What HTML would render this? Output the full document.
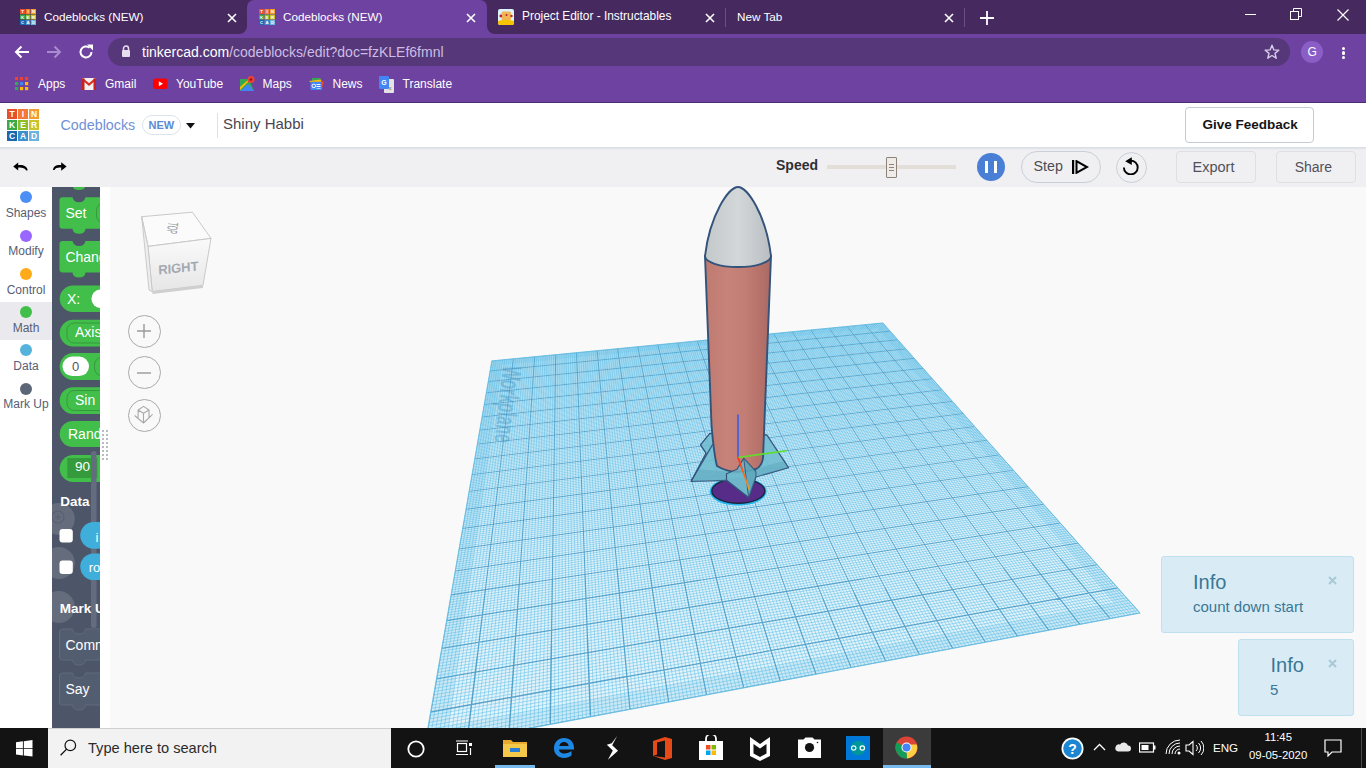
<!DOCTYPE html><html><head><meta charset="utf-8"><style>
html,body{margin:0;padding:0;width:1366px;height:768px;overflow:hidden;background:#f9f9f9}
body{position:relative;font-family:"Liberation Sans", sans-serif}
svg{display:block}
</style></head><body>
<div style="position:absolute;left:0px;top:0px;width:1366px;height:34px;background:#46295f"></div>
<div style="position:absolute;left:247px;top:0;width:240px;height:34px;background:#6e42a0;border-radius:7px 7px 0 0"></div>
<div style="position:absolute;left:239px;top:26px;width:8px;height:8px;background:#6e42a0"></div>
<div style="position:absolute;left:231px;top:18px;width:16px;height:16px;background:#46295f;border-radius:50%"></div>
<div style="position:absolute;left:487px;top:26px;width:8px;height:8px;background:#6e42a0"></div>
<div style="position:absolute;left:487px;top:18px;width:16px;height:16px;background:#46295f;border-radius:50%"></div>
<svg style="position:absolute;left:20px;top:9px;" width="16" height="16" viewBox="0 0 16 16"><rect x="0.00" y="0.00" width="5.00" height="5.00" fill="#e8502b"/><text x="2.50" y="4.10" font-size="4.25" font-weight="bold" fill="#fff" text-anchor="middle" font-family="Liberation Sans">T</text><rect x="5.50" y="0.00" width="5.00" height="5.00" fill="#f37934"/><text x="8.00" y="4.10" font-size="4.25" font-weight="bold" fill="#fff" text-anchor="middle" font-family="Liberation Sans">I</text><rect x="11.00" y="0.00" width="5.00" height="5.00" fill="#f39c34"/><text x="13.50" y="4.10" font-size="4.25" font-weight="bold" fill="#fff" text-anchor="middle" font-family="Liberation Sans">N</text><rect x="0.00" y="5.50" width="5.00" height="5.00" fill="#3aa84a"/><text x="2.50" y="9.60" font-size="4.25" font-weight="bold" fill="#fff" text-anchor="middle" font-family="Liberation Sans">K</text><rect x="5.50" y="5.50" width="5.00" height="5.00" fill="#8dbf25"/><text x="8.00" y="9.60" font-size="4.25" font-weight="bold" fill="#fff" text-anchor="middle" font-family="Liberation Sans">E</text><rect x="11.00" y="5.50" width="5.00" height="5.00" fill="#c9c42e"/><text x="13.50" y="9.60" font-size="4.25" font-weight="bold" fill="#fff" text-anchor="middle" font-family="Liberation Sans">R</text><rect x="0.00" y="11.00" width="5.00" height="5.00" fill="#1767b1"/><text x="2.50" y="15.10" font-size="4.25" font-weight="bold" fill="#fff" text-anchor="middle" font-family="Liberation Sans">C</text><rect x="5.50" y="11.00" width="5.00" height="5.00" fill="#3e8fcd"/><text x="8.00" y="15.10" font-size="4.25" font-weight="bold" fill="#fff" text-anchor="middle" font-family="Liberation Sans">A</text><rect x="11.00" y="11.00" width="5.00" height="5.00" fill="#6ab4e0"/><text x="13.50" y="15.10" font-size="4.25" font-weight="bold" fill="#fff" text-anchor="middle" font-family="Liberation Sans">D</text></svg>
<div style="position:absolute;left:44px;top:11.03px;font-size:11.7px;line-height:11.7px;color:#fff;font-weight:400;white-space:nowrap;">Codeblocks (NEW)</div>
<svg style="position:absolute;left:227px;top:12.5px;" width="10" height="10" viewBox="0 0 10 10"><path d="M1 1L9 9M9 1L1 9" stroke="#fff" stroke-width="1.6"/></svg>
<svg style="position:absolute;left:259px;top:9px;" width="16" height="16" viewBox="0 0 16 16"><rect x="0.00" y="0.00" width="5.00" height="5.00" fill="#e8502b"/><text x="2.50" y="4.10" font-size="4.25" font-weight="bold" fill="#fff" text-anchor="middle" font-family="Liberation Sans">T</text><rect x="5.50" y="0.00" width="5.00" height="5.00" fill="#f37934"/><text x="8.00" y="4.10" font-size="4.25" font-weight="bold" fill="#fff" text-anchor="middle" font-family="Liberation Sans">I</text><rect x="11.00" y="0.00" width="5.00" height="5.00" fill="#f39c34"/><text x="13.50" y="4.10" font-size="4.25" font-weight="bold" fill="#fff" text-anchor="middle" font-family="Liberation Sans">N</text><rect x="0.00" y="5.50" width="5.00" height="5.00" fill="#3aa84a"/><text x="2.50" y="9.60" font-size="4.25" font-weight="bold" fill="#fff" text-anchor="middle" font-family="Liberation Sans">K</text><rect x="5.50" y="5.50" width="5.00" height="5.00" fill="#8dbf25"/><text x="8.00" y="9.60" font-size="4.25" font-weight="bold" fill="#fff" text-anchor="middle" font-family="Liberation Sans">E</text><rect x="11.00" y="5.50" width="5.00" height="5.00" fill="#c9c42e"/><text x="13.50" y="9.60" font-size="4.25" font-weight="bold" fill="#fff" text-anchor="middle" font-family="Liberation Sans">R</text><rect x="0.00" y="11.00" width="5.00" height="5.00" fill="#1767b1"/><text x="2.50" y="15.10" font-size="4.25" font-weight="bold" fill="#fff" text-anchor="middle" font-family="Liberation Sans">C</text><rect x="5.50" y="11.00" width="5.00" height="5.00" fill="#3e8fcd"/><text x="8.00" y="15.10" font-size="4.25" font-weight="bold" fill="#fff" text-anchor="middle" font-family="Liberation Sans">A</text><rect x="11.00" y="11.00" width="5.00" height="5.00" fill="#6ab4e0"/><text x="13.50" y="15.10" font-size="4.25" font-weight="bold" fill="#fff" text-anchor="middle" font-family="Liberation Sans">D</text></svg>
<div style="position:absolute;left:283px;top:11.03px;font-size:11.7px;line-height:11.7px;color:#fff;font-weight:400;white-space:nowrap;">Codeblocks (NEW)</div>
<svg style="position:absolute;left:466px;top:12.5px;" width="10" height="10" viewBox="0 0 10 10"><path d="M1 1L9 9M9 1L1 9" stroke="#fff" stroke-width="1.6"/></svg>
<svg style="position:absolute;left:498px;top:9px;" width="16" height="16" viewBox="0 0 16 16"><rect x="0" y="0" width="16" height="16" rx="2" fill="#dcf3fb"/><rect x="3.5" y="2.5" width="9.5" height="9" rx="1.5" fill="#f1b456"/><circle cx="2.8" cy="7" r="1.4" fill="#c02424"/><circle cx="13.5" cy="7" r="1.2" fill="#c02424"/><circle cx="8.5" cy="6" r="1" fill="#b03020"/><path d="M0 12Q8 9.5 16 12V14A2 2 0 0 1 14 16H2A2 2 0 0 1 0 14Z" fill="#f7c300"/></svg>
<div style="position:absolute;left:522px;top:11.00px;font-size:11.9px;line-height:11.9px;color:#fff;font-weight:400;white-space:nowrap;">Project Editor - Instructables</div>
<svg style="position:absolute;left:704.5px;top:12.5px;" width="10" height="10" viewBox="0 0 10 10"><path d="M1 1L9 9M9 1L1 9" stroke="#fff" stroke-width="1.6"/></svg>
<div style="position:absolute;left:725px;top:8px;width:1px;height:19px;background:#6a5086"></div>
<div style="position:absolute;left:737px;top:11.03px;font-size:11.7px;line-height:11.7px;color:#fff;font-weight:400;white-space:nowrap;">New Tab</div>
<svg style="position:absolute;left:944px;top:12.5px;" width="10" height="10" viewBox="0 0 10 10"><path d="M1 1L9 9M9 1L1 9" stroke="#fff" stroke-width="1.6"/></svg>
<div style="position:absolute;left:964px;top:8px;width:1px;height:19px;background:#6a5086"></div>
<svg style="position:absolute;left:980px;top:11px;" width="14" height="14" viewBox="0 0 14 14"><path d="M7 0V14M0 7H14" stroke="#fff" stroke-width="1.8"/></svg>
<div style="position:absolute;left:1245px;top:14px;width:11px;height:1px;background:#fff"></div>
<svg style="position:absolute;left:1290px;top:8px;" width="13" height="12" viewBox="0 0 13 12"><rect x="0.5" y="3.5" width="8" height="8" fill="none" stroke="#fff"/><path d="M3.5 3.5V0.5H11.5V8.5H8.5" fill="none" stroke="#fff"/></svg>
<svg style="position:absolute;left:1337px;top:9px;" width="12" height="12" viewBox="0 0 12 12"><path d="M0.5 0.5L11.5 11.5M11.5 0.5L0.5 11.5" stroke="#fff" stroke-width="1.2"/></svg>
<div style="position:absolute;left:0px;top:34px;width:1366px;height:68px;background:#6e42a0"></div>
<svg style="position:absolute;left:14px;top:45px;" width="16" height="14" viewBox="0 0 16 14"><path d="M15 7H2M7.5 1.5L2 7L7.5 12.5" fill="none" stroke="#fff" stroke-width="2"/></svg>
<svg style="position:absolute;left:46px;top:45px;" width="16" height="14" viewBox="0 0 16 14"><path d="M1 7H14M8.5 1.5L14 7L8.5 12.5" fill="none" stroke="#a98bd0" stroke-width="2"/></svg>
<svg style="position:absolute;left:78px;top:44px;" width="16" height="16" viewBox="0 0 16 16"><path d="M13.5 8A5.5 5.5 0 1 1 11.6 3.8" fill="none" stroke="#fff" stroke-width="2"/><path d="M9 0.5H15V6.5Z" fill="#fff"/></svg>
<div style="position:absolute;left:108px;top:38px;width:1182px;height:28px;border-radius:14px;background:#55377a"></div>
<svg style="position:absolute;left:121px;top:45px;" width="10" height="12" viewBox="0 0 10 12"><path d="M2.5 5V3.5A2.5 2.5 0 0 1 7.5 3.5V5" fill="none" stroke="#e6def0" stroke-width="1.5"/><rect x="1" y="5" width="8" height="7" rx="1" fill="#e6def0"/></svg>
<div style="position:absolute;left:142px;top:45.06px;font-size:14px;line-height:14px;color:#fff;font-weight:400;white-space:nowrap;">tinkercad.com<span style="color:#cdbde3">/codeblocks/edit?doc=fzKLEf6fmnl</span></div>
<svg style="position:absolute;left:1264px;top:44px;" width="16" height="16" viewBox="0 0 16 16"><path d="M8 1.2L9.9 5.9L14.8 6.2L11 9.4L12.2 14.2L8 11.5L3.8 14.2L5 9.4L1.2 6.2L6.1 5.9Z" fill="none" stroke="#d8cce8" stroke-width="1.4" stroke-linejoin="round"/></svg>
<div style="position:absolute;left:1301px;top:41px;width:22px;height:22px;border-radius:50%;background:#8a5dc7"></div>
<div style="position:absolute;left:1307.5px;top:45.88px;font-size:12px;line-height:12px;color:#fff;font-weight:400;white-space:nowrap;">G</div>
<div style="position:absolute;left:1342px;top:46.8px;width:3.4px;height:3.4px;border-radius:50%;background:#fff"></div>
<div style="position:absolute;left:1342px;top:51.3px;width:3.4px;height:3.4px;border-radius:50%;background:#fff"></div>
<div style="position:absolute;left:1342px;top:55.8px;width:3.4px;height:3.4px;border-radius:50%;background:#fff"></div>
<svg style="position:absolute;left:15px;top:77px;" width="14" height="14" viewBox="0 0 14 14"><rect x="0" y="0" width="3.2" height="3.2" fill="#ea4335"/><rect x="5" y="0" width="3.2" height="3.2" fill="#ea4335"/><rect x="10" y="0" width="3.2" height="3.2" fill="#ea4335"/><rect x="0" y="5" width="3.2" height="3.2" fill="#34a853"/><rect x="5" y="5" width="3.2" height="3.2" fill="#4285f4"/><rect x="10" y="5" width="3.2" height="3.2" fill="#fbbc05"/><rect x="0" y="10" width="3.2" height="3.2" fill="#34a853"/><rect x="5" y="10" width="3.2" height="3.2" fill="#fbbc05"/><rect x="10" y="10" width="3.2" height="3.2" fill="#fbbc05"/></svg>
<div style="position:absolute;left:38px;top:77.88px;font-size:12px;line-height:12px;color:#fff;font-weight:400;white-space:nowrap;">Apps</div>
<svg style="position:absolute;left:82px;top:78px;" width="14" height="12" viewBox="0 0 14 12"><rect x="0" y="0" width="14" height="12" rx="1.5" fill="#f1f1f1"/><path d="M0.5 1L7 6.5L13.5 1" fill="none" stroke="#d93025" stroke-width="2.2"/><rect x="0" y="0.5" width="2.5" height="11.5" fill="#c5221f"/><rect x="11.5" y="0.5" width="2.5" height="11.5" fill="#c5221f"/></svg>
<div style="position:absolute;left:105px;top:77.88px;font-size:12px;line-height:12px;color:#fff;font-weight:400;white-space:nowrap;">Gmail</div>
<svg style="position:absolute;left:153px;top:78px;" width="15" height="12" viewBox="0 0 15 12"><rect x="0" y="0.5" width="14.5" height="10.5" rx="2.5" fill="#f00"/><path d="M5.8 3.3L10 5.75L5.8 8.2Z" fill="#fff"/></svg>
<div style="position:absolute;left:176px;top:77.88px;font-size:12px;line-height:12px;color:#fff;font-weight:400;white-space:nowrap;">YouTube</div>
<svg style="position:absolute;left:239px;top:75px;" width="16" height="17" viewBox="0 0 16 17"><path d="M1 4H10L15 16H1Z" fill="#34a853"/><path d="M1 16L9 9L15 16Z" fill="#4285f4"/><path d="M1 12L10 4H12L1 15Z" fill="#fbbc05"/><circle cx="12" cy="4.5" r="3.6" fill="#ea4335"/><circle cx="12" cy="4.5" r="1.3" fill="#a50e0e"/></svg>
<div style="position:absolute;left:262.5px;top:77.88px;font-size:12px;line-height:12px;color:#fff;font-weight:400;white-space:nowrap;">Maps</div>
<svg style="position:absolute;left:309px;top:78px;" width="15" height="12" viewBox="0 0 15 12"><rect x="3" y="0" width="8.5" height="3" fill="#34a853"/><path d="M0.3 3L12 1.5L12.5 4H0.8Z" fill="#fbbc05"/><path d="M12 2.5L14.7 3.5L13.5 10Z" fill="#ea4335"/><rect x="1.5" y="3.8" width="11.5" height="8.2" rx="0.6" fill="#4285f4"/><circle cx="4.8" cy="7.9" r="1.8" fill="none" stroke="#fff" stroke-width="1"/><rect x="7.5" y="6" width="4" height="1" fill="#fff"/><rect x="7.5" y="8" width="4" height="1" fill="#fff"/><rect x="7.5" y="10" width="4" height="0.8" fill="#cfe0fc"/></svg>
<div style="position:absolute;left:332.5px;top:77.88px;font-size:12px;line-height:12px;color:#fff;font-weight:400;white-space:nowrap;">News</div>
<svg style="position:absolute;left:379px;top:76px;" width="15" height="17" viewBox="0 0 15 17"><rect x="5" y="3" width="10" height="14" rx="1" fill="#e3e3e3"/><rect x="0" y="0" width="10" height="13" rx="1" fill="#4285f4"/><text x="5" y="9" font-size="7" fill="#fff" text-anchor="middle" font-family="Liberation Sans" font-weight="bold">G</text><text x="11" y="14" font-size="6" fill="#666" text-anchor="middle" font-family="Liberation Sans">x</text></svg>
<div style="position:absolute;left:402.5px;top:77.88px;font-size:12px;line-height:12px;color:#fff;font-weight:400;white-space:nowrap;">Translate</div>
<div style="position:absolute;left:0px;top:102px;width:1366px;height:1px;background:#4b2b72"></div>
<div style="position:absolute;left:0px;top:103px;width:1366px;height:44px;background:#fff"></div>
<svg style="position:absolute;left:7px;top:109px;" width="32" height="32" viewBox="0 0 32 32"><rect x="0.00" y="0.00" width="10.00" height="10.00" fill="#e8502b"/><text x="5.00" y="8.20" font-size="8.50" font-weight="bold" fill="#fff" text-anchor="middle" font-family="Liberation Sans">T</text><rect x="11.00" y="0.00" width="10.00" height="10.00" fill="#f37934"/><text x="16.00" y="8.20" font-size="8.50" font-weight="bold" fill="#fff" text-anchor="middle" font-family="Liberation Sans">I</text><rect x="22.00" y="0.00" width="10.00" height="10.00" fill="#f39c34"/><text x="27.00" y="8.20" font-size="8.50" font-weight="bold" fill="#fff" text-anchor="middle" font-family="Liberation Sans">N</text><rect x="0.00" y="11.00" width="10.00" height="10.00" fill="#3aa84a"/><text x="5.00" y="19.20" font-size="8.50" font-weight="bold" fill="#fff" text-anchor="middle" font-family="Liberation Sans">K</text><rect x="11.00" y="11.00" width="10.00" height="10.00" fill="#8dbf25"/><text x="16.00" y="19.20" font-size="8.50" font-weight="bold" fill="#fff" text-anchor="middle" font-family="Liberation Sans">E</text><rect x="22.00" y="11.00" width="10.00" height="10.00" fill="#c9c42e"/><text x="27.00" y="19.20" font-size="8.50" font-weight="bold" fill="#fff" text-anchor="middle" font-family="Liberation Sans">R</text><rect x="0.00" y="22.00" width="10.00" height="10.00" fill="#1767b1"/><text x="5.00" y="30.20" font-size="8.50" font-weight="bold" fill="#fff" text-anchor="middle" font-family="Liberation Sans">C</text><rect x="11.00" y="22.00" width="10.00" height="10.00" fill="#3e8fcd"/><text x="16.00" y="30.20" font-size="8.50" font-weight="bold" fill="#fff" text-anchor="middle" font-family="Liberation Sans">A</text><rect x="22.00" y="22.00" width="10.00" height="10.00" fill="#6ab4e0"/><text x="27.00" y="30.20" font-size="8.50" font-weight="bold" fill="#fff" text-anchor="middle" font-family="Liberation Sans">D</text></svg>
<div style="position:absolute;left:60.5px;top:118.01px;font-size:14.3px;line-height:14.3px;color:#6f90d8;font-weight:400;white-space:nowrap;">Codeblocks</div>
<div style="position:absolute;left:142px;top:115px;width:37px;height:18px;border:1px solid #dde3ea;border-radius:10px;background:#fff"></div>
<div style="position:absolute;left:148.5px;top:119.54px;font-size:11px;line-height:11px;color:#5b8ad6;font-weight:700;white-space:nowrap;">NEW</div>
<svg style="position:absolute;left:186px;top:123px;" width="9" height="6" viewBox="0 0 9 6"><path d="M0 0H9L4.5 5.5Z" fill="#111"/></svg>
<div style="position:absolute;left:217px;top:113px;width:1px;height:25px;background:#dde1e6"></div>
<div style="position:absolute;left:223px;top:115.80px;font-size:15px;line-height:15px;color:#4a4550;font-weight:400;white-space:nowrap;">Shiny Habbi</div>
<div style="position:absolute;left:1185px;top:107px;width:127px;height:34px;border:1px solid #c3cbd6;border-radius:4px;background:#fff"></div>
<div style="position:absolute;left:1202.5px;top:117.84px;font-size:13.5px;line-height:13.5px;color:#141414;font-weight:700;white-space:nowrap;">Give Feedback</div>
<div style="position:absolute;left:0px;top:147px;width:1366px;height:40px;background:#f0f0f3"></div>
<div style="position:absolute;left:0px;top:147px;width:1366px;height:3px;background:linear-gradient(#d5dae2,#f0f0f3)"></div>
<svg style="position:absolute;left:12px;top:160px;" width="17" height="13" viewBox="0 0 17 13"><path d="M1.2 6.4L6.2 2.4V10.6Z" fill="#000"/><path d="M5.5 5.3C10.5 4.4 14.6 5.6 15.8 10.2L14.1 10.5C12.8 7.9 9.5 7.3 5.5 7.7Z" fill="#000"/></svg>
<svg style="position:absolute;left:52px;top:160px;" width="17" height="13" viewBox="0 0 17 13"><path d="M14.6 6.4L9.2 2.3V10.8Z" fill="#000"/><path d="M9.8 5.3C5 4.4 1.5 5.6 0.9 9.9L2.5 10.1C3.6 7.8 6.4 7.3 9.8 7.7Z" fill="#000"/></svg>
<div style="position:absolute;left:776px;top:157.76px;font-size:14px;line-height:14px;color:#2f2f35;font-weight:700;white-space:nowrap;">Speed</div>
<div style="position:absolute;left:827px;top:165px;width:129px;height:4px;background:#e4ded8"></div>
<div style="position:absolute;left:886px;top:157px;width:9px;height:19px;border:1px solid #8c837a;background:#eeebe8;border-radius:1px"></div>
<div style="position:absolute;left:888.5px;top:164px;width:5px;height:1px;background:#8c837a"></div>
<div style="position:absolute;left:888.5px;top:167px;width:5px;height:1px;background:#8c837a"></div>
<div style="position:absolute;left:888.5px;top:170px;width:5px;height:1px;background:#8c837a"></div>
<div style="position:absolute;left:977px;top:153px;width:28px;height:28px;border-radius:50%;background:#4a7fd6"></div>
<div style="position:absolute;left:984.5px;top:161px;width:3.5px;height:11.5px;background:#fff"></div>
<div style="position:absolute;left:993.5px;top:161px;width:3.5px;height:11.5px;background:#fff"></div>
<div style="position:absolute;left:1021px;top:151px;width:78px;height:30px;border:1px solid #c9cfd8;border-radius:16px"></div>
<div style="position:absolute;left:1033.5px;top:159.21px;font-size:14.3px;line-height:14.3px;color:#4c4c52;font-weight:400;white-space:nowrap;">Step</div>
<svg style="position:absolute;left:1071px;top:160px;" width="18" height="14" viewBox="0 0 18 14"><rect x="1" y="0" width="2.2" height="14" fill="#000"/><path d="M5.5 1.2L16 7L5.5 12.8Z" fill="none" stroke="#000" stroke-width="2"/></svg>
<div style="position:absolute;left:1116px;top:152px;width:29px;height:29px;border:1px solid #c9cfd8;border-radius:50%"></div>
<svg style="position:absolute;left:1122px;top:157px;" width="18" height="18" viewBox="0 0 18 18"><path d="M1.9 10.5A6.9 6.9 0 1 0 8.8 3.6" fill="none" stroke="#000" stroke-width="1.9"/><path d="M3.2 4.2L9.8 0.3V8Z" fill="#000"/></svg>
<div style="position:absolute;left:1176px;top:151px;width:78px;height:30px;border:1px solid #dcdfe4;border-radius:4px"></div>
<div style="position:absolute;left:1192.5px;top:159.68px;font-size:14.5px;line-height:14.5px;color:#505058;font-weight:400;white-space:nowrap;">Export</div>
<div style="position:absolute;left:1276px;top:151px;width:78px;height:30px;border:1px solid #dcdfe4;border-radius:4px"></div>
<div style="position:absolute;left:1294.7px;top:159.76px;font-size:14px;line-height:14px;color:#505058;font-weight:400;white-space:nowrap;">Share</div>
<div style="position:absolute;left:0px;top:187px;width:1366px;height:541px;background:#f9f9f9"></div>
<div style="position:absolute;left:0px;top:187px;width:52px;height:541px;background:#fff"></div>
<div style="position:absolute;left:0px;top:302px;width:52px;height:38px;background:#e9e9ee"></div>
<div style="position:absolute;left:20px;top:191px;width:12px;height:12px;border-radius:50%;background:#4c8ff5"></div>
<div style="position:absolute;left:0;width:52px;text-align:center;top:206.78px;font-size:12px;line-height:12px;color:#575e75;white-space:nowrap">Shapes</div>
<div style="position:absolute;left:20px;top:229.5px;width:12px;height:12px;border-radius:50%;background:#9966ff"></div>
<div style="position:absolute;left:0;width:52px;text-align:center;top:245.28px;font-size:12px;line-height:12px;color:#575e75;white-space:nowrap">Modify</div>
<div style="position:absolute;left:20px;top:267.8px;width:12px;height:12px;border-radius:50%;background:#ffab19"></div>
<div style="position:absolute;left:0;width:52px;text-align:center;top:283.58px;font-size:12px;line-height:12px;color:#575e75;white-space:nowrap">Control</div>
<div style="position:absolute;left:20px;top:306.2px;width:12px;height:12px;border-radius:50%;background:#40bf4a"></div>
<div style="position:absolute;left:0;width:52px;text-align:center;top:321.98px;font-size:12px;line-height:12px;color:#575e75;white-space:nowrap">Math</div>
<div style="position:absolute;left:20px;top:344.4px;width:12px;height:12px;border-radius:50%;background:#55b3dc"></div>
<div style="position:absolute;left:0;width:52px;text-align:center;top:360.18px;font-size:12px;line-height:12px;color:#575e75;white-space:nowrap">Data</div>
<div style="position:absolute;left:20px;top:382.6px;width:12px;height:12px;border-radius:50%;background:#5b6677"></div>
<div style="position:absolute;left:0;width:52px;text-align:center;top:398.38px;font-size:12px;line-height:12px;color:#575e75;white-space:nowrap">Mark Up</div>
<div style="position:absolute;left:52px;top:187px;width:48px;height:541px;background:#4c5668"></div>
<div style="position:absolute;left:100px;top:187px;width:10px;height:541px;background:#fff"></div>
<svg style="position:absolute;left:52px;top:187px;" width="48" height="541" viewBox="0 0 48 541"><path d="M21 0H33Q32.5 3 27 3Q21.5 3 21 0Z" fill="#42be4a"/><path d="M7.5 13.3Q7.5 10.3 10.5 10.3H20.5Q21.5 15.3 27 15.3Q32.5 15.3 33.5 10.3H60V41.8H33.5Q33 46.8 27 46.8Q21 46.8 20.5 41.8H10.5Q7.5 41.8 7.5 38.8Z" fill="#42be4a" stroke="none"/><rect x="44.5" y="15.8" width="20" height="20.5" rx="8" fill="none" stroke="#359a3c" stroke-width="1"/><path d="M7.5 57Q7.5 54 10.5 54H20.5Q21.5 59 27 59Q32.5 59 33.5 54H60V85.5H33.5Q33 90.5 27 90.5Q21 90.5 20.5 85.5H10.5Q7.5 85.5 7.5 82.5Z" fill="#42be4a" stroke="none"/><path d="M20.95 98.5H60V125.0H20.95A13.25 13.25 0 0 1 20.95 98.5Z" fill="#42be4a"/><rect x="39.4" y="102.5" width="30" height="18.5" rx="9.25" fill="#fff"/><path d="M21.0 132.8H60V159.4H21.0A13.3 13.3 0 0 1 21.0 132.8Z" fill="#42be4a"/><rect x="15" y="136" width="60" height="20" rx="7" fill="none" stroke="#359a3c" stroke-width="1"/><path d="M21.2 166H60V193H21.2A13.5 13.5 0 0 1 21.2 166Z" fill="#42be4a"/><rect x="10.5" y="169.6" width="26.5" height="19.5" rx="9.75" fill="#fff"/><rect x="42.5" y="170" width="30" height="19" rx="8" fill="none" stroke="#359a3c" stroke-width="1"/><path d="M21.05 200.2H60V226.89999999999998H21.05A13.35 13.35 0 0 1 21.05 200.2Z" fill="#42be4a"/><rect x="15" y="203.5" width="60" height="20" rx="7" fill="none" stroke="#359a3c" stroke-width="1"/><path d="M20.7 234H60V260H20.7A13.0 13.0 0 0 1 20.7 234Z" fill="#42be4a"/><path d="M21.2 268H60V295H21.2A13.5 13.5 0 0 1 21.2 268Z" fill="#42be4a"/><rect x="15.3" y="271" width="30" height="20" fill="#359a3c"/><rect x="39" y="264" width="5.5" height="177" rx="2.5" fill="#646d7f"/><circle cx="6.75" cy="332" r="16" fill="#fff" fill-opacity="0.14"/><circle cx="6.75" cy="376" r="16" fill="#fff" fill-opacity="0.14"/><circle cx="6.75" cy="420" r="16" fill="#fff" fill-opacity="0.14"/><circle cx="6" cy="330" r="6" fill="none" stroke="#4c5668" stroke-opacity="0.5" stroke-width="1.2"/><path d="M3 330H9M6 327V333" stroke="#4c5668" stroke-opacity="0.5"/><rect x="7.5" y="342" width="13.3" height="13.4" rx="3" fill="#fff"/><rect x="7.5" y="373.5" width="13.3" height="13.4" rx="3" fill="#fff"/><path d="M41.6 335H60V361.7H41.6A13.35 13.35 0 0 1 41.6 335Z" fill="#40aedb"/><path d="M41.6 366.4H60V393.09999999999997H41.6A13.35 13.35 0 0 1 41.6 366.4Z" fill="#40aedb"/><path d="M7.5 445Q7.5 442 10.5 442H20.5Q21.5 447 27 447Q32.5 447 33.5 442H60V473H33.5Q33 478 27 478Q21 478 20.5 473H10.5Q7.5 473 7.5 470Z" fill="#535d70" stroke="#5f6a7d"/><path d="M7.5 489Q7.5 486 10.5 486H20.5Q21.5 491 27 491Q32.5 491 33.5 486H60V518H33.5Q33 523 27 523Q21 523 20.5 518H10.5Q7.5 518 7.5 515Z" fill="#535d70" stroke="#5f6a7d"/></svg>
<div style="position:absolute;left:67px;top:292.26px;font-size:14px;line-height:14px;color:#fff;font-weight:400;white-space:nowrap;">X:</div>
<div style="position:absolute;left:75px;top:325.26px;font-size:14px;line-height:14px;color:#fff;font-weight:400;white-space:nowrap;">Axis</div>
<div style="position:absolute;left:72px;top:359.92px;font-size:13px;line-height:13px;color:#555;font-weight:400;white-space:nowrap;">0</div>
<div style="position:absolute;left:75px;top:393.26px;font-size:14px;line-height:14px;color:#fff;font-weight:400;white-space:nowrap;">Sin</div>
<div style="position:absolute;left:68px;top:427.26px;font-size:14px;line-height:14px;color:#fff;font-weight:400;white-space:nowrap;">Rand</div>
<div style="position:absolute;left:75px;top:460.34px;font-size:13.5px;line-height:13.5px;color:#fff;font-weight:400;white-space:nowrap;">90</div>
<div style="position:absolute;left:65.4px;top:205.76px;font-size:14px;line-height:14px;color:#fff;font-weight:400;white-space:nowrap;">Set</div>
<div style="position:absolute;left:65.4px;top:250.16px;font-size:14px;line-height:14px;color:#fff;font-weight:400;white-space:nowrap;">Chang</div>
<div style="position:absolute;left:60.3px;top:495.34px;font-size:13.5px;line-height:13.5px;color:#fff;font-weight:700;white-space:nowrap;">Data</div>
<div style="position:absolute;left:95.5px;top:530.92px;font-size:13px;line-height:13px;color:#fff;font-weight:400;white-space:nowrap;">i</div>
<div style="position:absolute;left:88.7px;top:560.92px;font-size:13px;line-height:13px;color:#fff;font-weight:400;white-space:nowrap;">ro</div>
<div style="position:absolute;left:59.7px;top:601.54px;font-size:13.5px;line-height:13.5px;color:#fff;font-weight:700;white-space:nowrap;">Mark U</div>
<div style="position:absolute;left:65.5px;top:637.76px;font-size:14px;line-height:14px;color:#fff;font-weight:400;white-space:nowrap;">Comm</div>
<div style="position:absolute;left:65.5px;top:681.76px;font-size:14px;line-height:14px;color:#fff;font-weight:400;white-space:nowrap;">Say</div>
<div style="position:absolute;left:100px;top:187px;width:10px;height:541px;background:#fff"></div>
<svg style="position:absolute;left:102px;top:430px;" width="8" height="32" viewBox="0 0 8 32"><rect x="0" y="0" width="2" height="2" fill="#b9bcc2"/><rect x="4" y="0" width="2" height="2" fill="#b9bcc2"/><rect x="0" y="4" width="2" height="2" fill="#b9bcc2"/><rect x="4" y="4" width="2" height="2" fill="#b9bcc2"/><rect x="0" y="8" width="2" height="2" fill="#b9bcc2"/><rect x="4" y="8" width="2" height="2" fill="#b9bcc2"/><rect x="0" y="12" width="2" height="2" fill="#b9bcc2"/><rect x="4" y="12" width="2" height="2" fill="#b9bcc2"/><rect x="0" y="16" width="2" height="2" fill="#b9bcc2"/><rect x="4" y="16" width="2" height="2" fill="#b9bcc2"/><rect x="0" y="20" width="2" height="2" fill="#b9bcc2"/><rect x="4" y="20" width="2" height="2" fill="#b9bcc2"/><rect x="0" y="24" width="2" height="2" fill="#b9bcc2"/><rect x="4" y="24" width="2" height="2" fill="#b9bcc2"/><rect x="0" y="28" width="2" height="2" fill="#b9bcc2"/><rect x="4" y="28" width="2" height="2" fill="#b9bcc2"/></svg>
<svg style="position:absolute;left:130px;top:205px;" width="95" height="95" viewBox="0 0 95 95"><path d="M11.7 11.7L62.4 7.2L81 33.4L18 41.4Z" fill="#fbfbfb" stroke="#c9c9c9" stroke-width="1"/><path d="M18 41.4L81 33.4L73 80.3L22.2 86.5Z" fill="url(#cg)" stroke="#c9c9c9" stroke-width="1"/><path d="M11.7 11.7L18 41.4L22.2 86.5L19 85Z" fill="#eeeeee" stroke="#c9c9c9" stroke-width="1"/><path d="M22.2 86.5L73 80.3L73 83L22.5 89Z" fill="#cfcfcf"/><defs><linearGradient id="cg" x1="0" y1="0" x2="0" y2="1"><stop offset="0" stop-color="#fafafa"/><stop offset="1" stop-color="#e6e6e6"/></linearGradient></defs><text x="0" y="0" font-family="Liberation Sans" font-size="14.5" fill="#8f959d" transform="translate(37.5 22.5) rotate(97) scale(0.38 1)" text-anchor="middle">TOP</text><text x="0" y="0" font-family="Liberation Sans" font-weight="bold" font-size="13" fill="#a3a8b0" transform="translate(48.5 67.5) rotate(-6) skewX(-4)" text-anchor="middle">RIGHT</text></svg>
<div style="position:absolute;left:127.5px;top:314.5px;width:31px;height:31px;border:1px solid #a9a9a9;border-radius:50%"></div>
<div style="position:absolute;left:127.5px;top:356.1px;width:31px;height:31px;border:1px solid #a9a9a9;border-radius:50%"></div>
<div style="position:absolute;left:127.5px;top:398.5px;width:31px;height:31px;border:1px solid #a9a9a9;border-radius:50%"></div>
<svg style="position:absolute;left:136px;top:323px;" width="16" height="16" viewBox="0 0 16 16"><path d="M8 1V15M1 8H15" stroke="#9a9a9a" stroke-width="1.4"/></svg>
<svg style="position:absolute;left:136px;top:364.6px;" width="16" height="16" viewBox="0 0 16 16"><path d="M1 8H15" stroke="#9a9a9a" stroke-width="1.4"/></svg>
<svg style="position:absolute;left:134px;top:405px;" width="20" height="20" viewBox="0 0 20 20"><path d="M9.5 1.4L15 5L9.5 8.2L4.1 5Z M9.5 8.2V17.6 M4.1 5V12.8 M15 5V12.8 M0.6 10.5L9.5 18L18.6 9.4" fill="none" stroke="#a9a9a9" stroke-width="1.1" stroke-linejoin="round"/></svg>
<svg style="position:absolute;left:100px;top:187px;overflow:hidden" width="1266" height="541" viewBox="0 0 1266 541"><defs><clipPath id="wpc"><polygon points="391.83,173.88 782.89,135.95 1040.09,426.05 324.36,561.26"/></clipPath></defs><polygon points="391.83,173.88 782.89,135.95 1040.09,426.05 324.36,561.26" fill="#e4f4fb"/><g clip-path="url(#wpc)"><path d="M393.99 173.67L328.68 560.44M391.66 174.87L783.61 136.76M396.15 173.46L332.99 559.63M391.49 175.86L784.32 137.57M398.31 173.25L337.30 558.82M391.31 176.86L785.05 138.38M400.46 173.04L341.59 558.00M391.14 177.86L785.77 139.20M402.62 172.83L345.88 557.20M390.96 178.86L786.50 140.02M404.77 172.63L350.15 556.39M390.79 179.87L787.23 140.85M406.91 172.42L354.42 555.58M390.61 180.89L787.97 141.68M409.06 172.21L358.68 554.78M390.43 181.91L788.71 142.51M411.20 172.00L362.93 553.97M390.25 182.94L789.45 143.35M415.48 171.59L371.41 552.37M389.89 185.01L790.94 145.03M417.62 171.38L375.63 551.57M389.71 186.05L791.70 145.88M419.75 171.17L379.84 550.78M389.53 187.10L792.45 146.74M421.89 170.96L384.05 549.98M389.34 188.15L793.21 147.59M424.02 170.76L388.25 549.19M389.16 189.21L793.97 148.45M426.14 170.55L392.44 548.40M388.97 190.28L794.74 149.32M428.27 170.35L396.62 547.61M388.79 191.35L795.51 150.18M430.39 170.14L400.79 546.82M388.60 192.42L796.28 151.06M432.51 169.93L404.95 546.03M388.41 193.50L797.06 151.93M436.75 169.52L413.26 544.47M388.03 195.68L798.62 153.70M438.86 169.32L417.39 543.68M387.84 196.78L799.41 154.59M440.98 169.11L421.52 542.90M387.65 197.88L800.20 155.48M443.08 168.91L425.64 542.13M387.46 198.99L801.00 156.38M445.19 168.70L429.76 541.35M387.26 200.10L801.80 157.28M447.30 168.50L433.86 540.57M387.07 201.22L802.60 158.18M449.40 168.30L437.96 539.80M386.87 202.35L803.41 159.09M451.50 168.09L442.05 539.03M386.67 203.48L804.22 160.01M453.60 167.89L446.13 538.26M386.48 204.62L805.03 160.92M457.79 167.48L454.26 536.72M386.08 206.91L806.67 162.77M459.88 167.28L458.31 535.95M385.87 208.07L807.50 163.70M461.97 167.08L462.36 535.19M385.67 209.23L808.33 164.64M464.06 166.87L466.40 534.43M385.47 210.40L809.16 165.58M466.15 166.67L470.43 533.67M385.26 211.58L810.00 166.53M468.23 166.47L474.45 532.91M385.06 212.76L810.84 167.48M470.31 166.27L478.47 532.15M384.85 213.95L811.69 168.43M472.39 166.07L482.47 531.39M384.64 215.14L812.54 169.39M474.47 165.86L486.47 530.64M384.43 216.34L813.39 170.35M478.62 165.46L494.44 529.13M384.01 218.77L815.11 172.29M480.69 165.26L498.42 528.38M383.80 219.99L815.98 173.27M482.76 165.06L502.38 527.63M383.59 221.21L816.85 174.25M484.82 164.86L506.34 526.88M383.37 222.45L817.73 175.24M486.89 164.66L510.29 526.14M383.15 223.69L818.60 176.23M488.95 164.46L514.23 525.39M382.94 224.94L819.49 177.23M491.01 164.26L518.17 524.65M382.72 226.19L820.38 178.23M493.07 164.06L522.10 523.91M382.50 227.45L821.27 179.24M495.12 163.86L526.01 523.16M382.28 228.72L822.17 180.25M499.23 163.46L533.83 521.69M381.83 231.28L823.98 182.29M501.28 163.26L537.73 520.95M381.61 232.57L824.89 183.32M503.32 163.07L541.61 520.22M381.38 233.87L825.80 184.35M505.37 162.87L545.49 519.49M381.15 235.18L826.72 185.39M507.41 162.67L549.37 518.75M380.93 236.49L827.65 186.43M509.45 162.47L553.23 518.02M380.70 237.81L828.58 187.48M511.49 162.27L557.09 517.29M380.46 239.14L829.51 188.53M513.53 162.08L560.94 516.57M380.23 240.47L830.45 189.59M515.56 161.88L564.78 515.84M380.00 241.82L831.39 190.66M519.63 161.48L572.44 514.39M379.53 244.52L833.30 192.80M521.65 161.29L576.26 513.67M379.29 245.89L834.25 193.88M523.68 161.09L580.07 512.95M379.05 247.27L835.22 194.97M525.70 160.90L583.88 512.23M378.81 248.65L836.19 196.06M527.73 160.70L587.68 511.52M378.57 250.04L837.16 197.16M529.75 160.50L591.47 510.80M378.32 251.44L838.14 198.26M531.76 160.31L595.25 510.09M378.08 252.84L839.12 199.37M533.78 160.11L599.02 509.37M377.83 254.26L840.11 200.49M535.79 159.92L602.79 508.66M377.58 255.68L841.10 201.61M539.81 159.53L610.31 507.24M377.08 258.56L843.11 203.87M541.82 159.33L614.05 506.53M376.83 260.00L844.12 205.01M543.83 159.14L617.79 505.83M376.58 261.46L845.13 206.15M545.83 158.94L621.52 505.12M376.32 262.93L846.15 207.30M547.83 158.75L625.24 504.42M376.06 264.40L847.18 208.46M549.83 158.55L628.96 503.72M375.80 265.89L848.21 209.63M551.83 158.36L632.67 503.02M375.54 267.38L849.25 210.80M553.82 158.17L636.37 502.32M375.28 268.88L850.29 211.97M555.82 157.97L640.07 501.62M375.02 270.40L851.34 213.15M559.80 157.59L647.44 500.23M374.49 273.45L853.45 215.54M561.79 157.40L651.11 499.53M374.22 274.99L854.52 216.74M563.77 157.20L654.78 498.84M373.95 276.54L855.59 217.95M565.75 157.01L658.44 498.15M373.68 278.09L856.66 219.16M567.74 156.82L662.09 497.46M373.41 279.66L857.75 220.38M569.71 156.63L665.74 496.77M373.13 281.24L858.84 221.61M571.69 156.43L669.38 496.08M372.85 282.83L859.93 222.85M573.67 156.24L673.01 495.40M372.58 284.43L861.03 224.09M575.64 156.05L676.63 494.71M372.30 286.04L862.14 225.34M579.58 155.67L683.86 493.35M371.73 289.28L864.37 227.85M581.55 155.48L687.47 492.66M371.44 290.92L865.50 229.12M583.51 155.29L691.07 491.98M371.16 292.57L866.63 230.40M585.48 155.10L694.66 491.31M370.87 294.23L867.77 231.68M587.44 154.91L698.24 490.63M370.58 295.90L868.91 232.98M589.40 154.72L701.82 489.95M370.28 297.58L870.06 234.27M591.35 154.53L705.39 489.28M369.99 299.27L871.22 235.58M593.31 154.34L708.95 488.61M369.69 300.98L872.38 236.89M595.26 154.15L712.51 487.93M369.39 302.69L873.56 238.21M599.16 153.77L719.60 486.59M368.79 306.15L875.92 240.88M601.11 153.58L723.14 485.93M368.49 307.90L877.11 242.22M603.06 153.39L726.67 485.26M368.18 309.66L878.31 243.57M605.00 153.20L730.19 484.59M367.87 311.43L879.51 244.93M606.94 153.02L733.71 483.93M367.56 313.22L880.72 246.30M608.88 152.83L737.22 483.27M367.25 315.01L881.94 247.67M610.82 152.64L740.72 482.60M366.93 316.82L883.17 249.06M612.75 152.45L744.22 481.94M366.62 318.64L884.40 250.45M614.69 152.26L747.71 481.28M366.30 320.47L885.64 251.85M618.55 151.89L754.67 479.97M365.65 324.17L888.15 254.67M620.48 151.70L758.14 479.31M365.33 326.04L889.41 256.09M622.40 151.52L761.60 478.66M365.00 327.92L890.68 257.53M624.33 151.33L765.06 478.01M364.67 329.81L891.96 258.97M626.25 151.14L768.51 477.35M364.34 331.72L893.24 260.42M628.17 150.96L771.96 476.70M364.00 333.64L894.53 261.87M630.09 150.77L775.40 476.05M363.67 335.57L895.83 263.34M632.00 150.58L778.83 475.41M363.33 337.52L897.14 264.82M633.92 150.40L782.26 474.76M362.99 339.48L898.46 266.30M637.74 150.03L789.09 473.47M362.30 343.44L901.12 269.30M639.65 149.84L792.49 472.82M361.95 345.44L902.46 270.81M641.56 149.66L795.90 472.18M361.60 347.46L903.81 272.33M643.46 149.47L799.29 471.54M361.24 349.49L905.16 273.86M645.36 149.29L802.68 470.90M360.89 351.53L906.53 275.40M647.27 149.10L806.06 470.26M360.53 353.59L907.90 276.95M649.17 148.92L809.43 469.62M360.17 355.67L909.29 278.51M651.06 148.74L812.80 468.99M359.80 357.75L910.68 280.08M652.96 148.55L816.17 468.35M359.44 359.86L912.08 281.66M656.74 148.19L822.87 467.08M358.70 364.11L914.90 284.85M658.63 148.00L826.22 466.45M358.32 366.26L916.33 286.46M660.52 147.82L829.56 465.82M357.95 368.43L917.76 288.08M662.41 147.64L832.89 465.19M357.57 370.61L919.21 289.70M664.29 147.45L836.22 464.56M357.18 372.81L920.66 291.34M666.17 147.27L839.54 463.94M356.80 375.02L922.12 292.99M668.05 147.09L842.85 463.31M356.41 377.25L923.60 294.65M669.93 146.91L846.16 462.69M356.02 379.50L925.08 296.32M671.81 146.72L849.46 462.06M355.62 381.76L926.57 298.01M675.56 146.36L856.04 460.82M354.83 386.34L929.58 301.40M677.43 146.18L859.33 460.20M354.42 388.65L931.10 303.12M679.30 146.00L862.61 459.58M354.02 390.99L932.63 304.84M681.17 145.82L865.88 458.96M353.61 393.34L934.17 306.58M683.03 145.64L869.14 458.34M353.19 395.71L935.72 308.33M684.90 145.45L872.41 457.73M352.78 398.09L937.28 310.09M686.76 145.27L875.66 457.11M352.36 400.50L938.85 311.86M688.62 145.09L878.91 456.50M351.94 402.92L940.43 313.64M690.48 144.91L882.15 455.89M351.51 405.36L942.02 315.44M694.19 144.55L888.62 454.66M350.65 410.31L945.24 319.07M696.04 144.37L891.84 454.06M350.22 412.81L946.86 320.90M697.89 144.19L895.06 453.45M349.78 415.33L948.50 322.74M699.74 144.01L898.28 452.84M349.34 417.87L950.14 324.60M701.59 143.84L901.48 452.23M348.89 420.43L951.80 326.47M703.43 143.66L904.68 451.63M348.44 423.01L953.47 328.35M705.28 143.48L907.88 451.03M347.99 425.61L955.15 330.24M707.12 143.30L911.07 450.42M347.53 428.23L956.84 332.15M708.96 143.12L914.26 449.82M347.07 430.87L958.54 334.07M712.64 142.76L920.61 448.62M346.14 436.22L961.98 337.95M714.47 142.59L923.78 448.02M345.67 438.93L963.72 339.91M716.30 142.41L926.94 447.43M345.19 441.66L965.47 341.89M718.13 142.23L930.09 446.83M344.71 444.41L967.23 343.87M719.96 142.05L933.24 446.23M344.23 447.19L969.01 345.88M721.79 141.88L936.39 445.64M343.74 449.99L970.80 347.89M723.62 141.70L939.53 445.05M343.25 452.81L972.60 349.92M725.44 141.52L942.66 444.46M342.75 455.66L974.41 351.97M727.26 141.35L945.79 443.86M342.25 458.53L976.24 354.03M730.90 140.99L952.03 442.69M341.24 464.34L979.93 358.19M732.72 140.82L955.14 442.10M340.73 467.28L981.79 360.30M734.54 140.64L958.25 441.51M340.21 470.25L983.67 362.42M736.35 140.46L961.35 440.92M339.69 473.25L985.56 364.55M738.16 140.29L964.45 440.34M339.16 476.27L987.47 366.70M739.97 140.11L967.54 439.76M338.63 479.31L989.39 368.87M741.78 139.94L970.62 439.17M338.10 482.38L991.33 371.05M743.59 139.76L973.70 438.59M337.56 485.48L993.27 373.25M745.39 139.59L976.77 438.01M337.01 488.61L995.24 375.46M748.99 139.24L982.90 436.85M335.91 494.95L999.21 379.94M750.79 139.06L985.96 436.28M335.35 498.16L1001.21 382.20M752.59 138.89L989.01 435.70M334.79 501.40L1003.24 384.48M754.39 138.71L992.06 435.12M334.22 504.66L1005.27 386.78M756.18 138.54L995.10 434.55M333.64 507.96L1007.33 389.10M757.97 138.37L998.14 433.98M333.06 511.29L1009.39 391.43M759.77 138.19L1001.17 433.40M332.48 514.65L1011.48 393.78M761.55 138.02L1004.19 432.83M331.89 518.04L1013.58 396.15M763.34 137.85L1007.21 432.26M331.29 521.46L1015.70 398.53M766.91 137.50L1013.24 431.12M330.08 528.39L1019.98 403.36M768.69 137.33L1016.24 430.56M329.47 531.91L1022.14 405.81M770.47 137.15L1019.24 429.99M328.85 535.46L1024.32 408.27M772.25 136.98L1022.23 429.42M328.23 539.04L1026.52 410.75M774.03 136.81L1025.22 428.86M327.60 542.66L1028.74 413.25M775.81 136.64L1028.21 428.29M326.96 546.31L1030.97 415.77M777.58 136.47L1031.19 427.73M326.32 549.99L1033.23 418.31M779.35 136.29L1034.16 427.17M325.67 553.71L1035.50 420.87M781.12 136.12L1037.13 426.61M325.02 557.47L1037.78 423.45" stroke="#63bfe6" stroke-opacity="0.9" stroke-width="0.6" fill="none"/><path d="M391.83 173.88L387.26 200.10M391.83 173.88L445.19 168.70M387.26 200.10L382.06 230.00M445.19 168.70L497.18 163.66M382.06 230.00L376.06 264.40M497.18 163.66L547.83 158.75M376.06 264.40L369.09 304.42M547.83 158.75L597.21 153.96M597.21 153.96L645.36 149.29M645.36 149.29L692.33 144.73M692.33 144.73L738.16 140.29M738.16 140.29L782.89 135.95M413.34 171.79L410.20 197.73M390.07 183.97L444.79 178.53M410.20 197.73L406.63 227.28M444.79 178.53L498.05 173.24M406.63 227.28L402.51 261.26M498.05 173.24L549.92 168.08M402.51 261.26L397.73 300.74M549.92 168.08L600.46 163.05M600.46 163.05L649.70 158.16M649.70 158.16L697.71 153.38M697.71 153.38L744.53 148.73M744.53 148.73L790.20 144.19M434.63 169.73L432.89 195.39M388.22 194.59L444.36 188.86M432.89 195.39L430.90 224.60M444.36 188.86L498.97 183.29M430.90 224.60L428.62 258.16M498.97 183.29L552.12 177.87M428.62 258.16L425.97 297.12M552.12 177.87L603.86 172.60M603.86 172.60L654.25 167.46M654.25 167.46L703.35 162.45M703.35 162.45L751.19 157.57M751.19 157.57L797.84 152.81M455.70 167.69L455.32 193.07M386.28 205.76L443.91 199.73M455.32 193.07L454.89 221.95M443.91 199.73L499.93 193.87M454.89 221.95L454.40 255.10M499.93 193.87L554.42 188.16M454.40 255.10L453.83 293.55M554.42 188.16L607.43 182.62M607.43 182.62L659.02 177.21M659.02 177.21L709.26 171.96M709.26 171.96L758.18 166.84M758.18 166.84L805.85 161.85M476.54 165.66L477.50 190.78M384.22 217.55L443.43 211.19M477.50 190.78L478.60 219.33M443.43 211.19L500.95 205.00M478.60 219.33L479.85 252.08M500.95 205.00L556.85 198.99M479.85 252.08L481.30 290.02M556.85 198.99L611.19 193.15M611.19 193.15L664.04 187.47M664.04 187.47L715.46 181.94M715.46 181.94L765.52 176.56M765.52 176.56L814.25 171.32M497.18 163.66L499.44 188.51M382.06 230.00L442.93 223.27M499.44 188.51L502.02 216.74M442.93 223.27L502.02 216.74M502.02 216.74L504.97 249.10M502.02 216.74L559.40 210.40M504.97 249.10L508.39 286.54M559.40 210.40L615.14 204.24M615.14 204.24L669.32 198.26M669.32 198.26L721.99 192.44M721.99 192.44L773.22 186.78M773.22 186.78L823.07 181.27M517.59 161.68L521.14 186.27M379.76 243.17L442.40 236.05M521.14 186.27L525.17 214.19M442.40 236.05L503.15 229.14M525.17 214.19L529.79 246.15M503.15 229.14L562.10 222.44M529.79 246.15L535.12 283.11M562.10 222.44L619.31 215.94M619.31 215.94L674.88 209.62M674.88 209.62L728.86 203.49M728.86 203.49L781.33 197.53M781.33 197.53L832.34 191.73M537.81 159.72L542.61 184.05M377.33 257.11L441.84 249.57M542.61 184.05L548.06 211.66M441.84 249.57L504.35 242.25M548.06 211.66L554.29 243.24M504.35 242.25L564.95 235.16M554.29 243.24L561.50 279.73M564.95 235.16L623.72 228.29M561.50 279.73L569.91 322.37M623.72 228.29L680.74 221.62M680.74 221.62L736.10 215.14M736.10 215.14L789.87 208.85M789.87 208.85L842.10 202.74M557.81 157.78L563.84 181.86M374.75 271.92L441.25 263.90M563.84 181.86L570.68 209.16M441.25 263.90L505.62 256.14M570.68 209.16L578.49 240.37M505.62 256.14L567.96 248.63M578.49 240.37L587.52 276.39M567.96 248.63L628.37 241.35M587.52 276.39L598.05 318.44M628.37 241.35L686.94 234.29M686.94 234.29L743.75 227.44M743.75 227.44L798.87 220.79M798.87 220.79L852.39 214.34M577.61 155.86L584.84 179.69M372.01 287.65L440.62 279.13M584.84 179.69L593.04 206.69M440.62 279.13L506.96 270.88M593.04 206.69L602.40 237.53M506.96 270.88L571.16 262.90M602.40 237.53L613.20 273.10M571.16 262.90L633.30 255.17M613.20 273.10L625.78 314.57M633.30 255.17L693.50 247.69M693.50 247.69L751.83 240.44M751.83 240.44L808.39 233.41M808.39 233.41L863.25 226.59M597.21 153.96L605.62 177.54M369.09 304.42L439.95 295.33M605.62 177.54L615.14 204.24M439.95 295.33L508.39 286.54M615.14 204.24L626.01 234.72M508.39 286.54L574.55 278.06M626.01 234.72L638.53 269.85M574.55 278.06L638.53 269.85M638.53 269.85L653.12 310.76M638.53 269.85L700.45 261.90M700.45 261.90L760.39 254.21M760.39 254.21L818.46 246.76M818.46 246.76L874.73 239.54M616.62 152.08L626.18 175.42M626.18 175.42L637.00 201.83M637.00 201.83L649.34 231.95M509.92 303.23L578.16 294.18M649.34 231.95L663.54 266.64M578.16 294.18L644.09 285.44M663.54 266.64L680.07 307.00M644.09 285.44L707.83 276.99M707.83 276.99L769.47 268.82M769.47 268.82L829.13 260.91M829.13 260.91L886.89 253.25M635.83 150.21L646.52 173.32M646.52 173.32L658.61 199.44M658.61 199.44L672.38 229.22M672.38 229.22L688.23 263.47M688.23 263.47L706.65 303.29M650.02 302.05L715.68 293.04M715.68 293.04L779.12 284.34M779.12 284.34L840.46 275.93M840.46 275.93L899.78 267.80M654.85 148.37L666.64 171.24M666.64 171.24L679.97 197.08M679.97 197.08L695.15 226.51M695.15 226.51L712.59 260.34M712.59 260.34L732.85 299.64M789.40 300.87L852.51 291.91M852.51 291.91L913.48 283.25M673.69 146.54L686.56 169.18M686.56 169.18L701.10 194.75M701.10 194.75L717.64 223.84M717.64 223.84L736.65 257.26M736.65 257.26L758.69 296.03M692.33 144.73L706.27 167.15M706.27 167.15L721.99 192.44M721.99 192.44L739.87 221.20M739.87 221.20L760.39 254.21M760.39 254.21L784.18 292.47M710.80 142.94L725.77 165.13M725.77 165.13L742.65 190.16M742.65 190.16L761.84 218.60M761.84 218.60L783.84 251.20M783.84 251.20L809.32 288.97M729.08 141.17L745.07 163.14M745.07 163.14L763.09 187.90M763.09 187.90L783.55 216.02M783.55 216.02L806.99 248.23M806.99 248.23L834.11 285.51M747.19 139.41L764.17 161.16M764.17 161.16L783.30 185.66M783.30 185.66L805.01 213.47M805.01 213.47L829.85 245.30M829.85 245.30L858.58 282.09M765.13 137.67L783.08 159.21M783.08 159.21L803.29 183.45M803.29 183.45L826.21 210.95M826.21 210.95L852.43 242.40M852.43 242.40L882.71 278.73M882.71 278.73L918.08 321.15M782.89 135.95L801.80 157.28M801.80 157.28L823.07 181.27M823.07 181.27L847.18 208.46M847.18 208.46L874.73 239.54M874.73 239.54L906.53 275.40M906.53 275.40L943.63 317.25" stroke="#3f97c4" stroke-opacity="0.85" stroke-width="0.9" fill="none"/><path d="M369.09 304.42L360.89 351.53M360.89 351.53L351.08 407.83M397.73 300.74L392.11 347.18M392.11 347.18L385.40 402.58M425.97 297.12L422.86 342.89M422.86 342.89L419.16 397.42M453.83 293.55L453.15 338.66M453.15 338.66L452.36 392.34M481.30 290.02L483.00 334.50M483.00 334.50L485.02 387.35M508.39 286.54L512.40 330.39M512.40 330.39L517.15 382.44M535.12 283.11L541.37 326.35M541.37 326.35L548.77 377.61M569.91 322.37L579.88 372.85M598.05 318.44L610.51 368.17M625.78 314.57L640.65 363.56M640.65 363.56L658.48 422.30M653.12 310.76L670.33 359.02M670.33 359.02L690.94 416.81M365.98 322.31L439.23 312.60M439.23 312.60L509.92 303.23M680.07 307.00L699.55 354.56M699.55 354.56L722.85 411.42M362.64 341.45L438.47 331.06M438.47 331.06L511.54 321.03M511.54 321.03L582.01 311.37M582.01 311.37L650.02 302.05M706.65 303.29L728.33 350.16M728.33 350.16L754.22 406.12M359.07 361.98L437.65 350.82M437.65 350.82L513.28 340.08M513.28 340.08L586.12 329.74M586.12 329.74L656.33 319.77M656.33 319.77L724.05 310.15M732.85 299.64L756.67 345.83M724.05 310.15L789.40 300.87M756.67 345.83L785.07 400.91M355.23 384.04L436.77 372.04M436.77 372.04L515.14 360.50M515.14 360.50L590.53 349.40M590.53 349.40L663.09 338.71M663.09 338.71L732.99 328.42M758.69 296.03L784.58 341.56M732.99 328.42L800.36 318.50M784.58 341.56L815.42 395.78M800.36 318.50L865.35 308.93M865.35 308.93L928.07 299.70M435.82 394.87L517.15 382.44M517.15 382.44L595.25 370.50M595.25 370.50L670.33 359.02M670.33 359.02L742.55 347.98M784.18 292.47L812.08 337.36M742.55 347.98L812.08 337.36M812.08 337.36L845.26 390.73M812.08 337.36L879.06 327.12M879.06 327.12L943.63 317.25M600.34 393.21L678.11 380.85M678.11 380.85L752.82 368.97M809.32 288.97L839.17 333.21M752.82 368.97L824.64 357.56M839.17 333.21L874.63 385.77M824.64 357.56L893.73 346.58M893.73 346.58L960.26 336.00M834.11 285.51L865.86 329.13M763.87 391.56L838.13 379.26M865.86 329.13L903.52 380.89M838.13 379.26L909.48 367.46M909.48 367.46L978.08 356.10M858.58 282.09L892.16 325.11M892.16 325.11L931.95 376.08M852.67 402.65L926.42 389.91M926.42 389.91L997.21 377.69M918.08 321.15L959.93 371.35M943.63 317.25L987.47 366.70M987.47 366.70L1040.09 426.05" stroke="#3f97c4" stroke-opacity="0.85" stroke-width="1.0" fill="none"/><path d="M351.08 407.83L339.16 476.27M385.40 402.58L377.26 469.83M419.16 397.42L414.67 463.51M452.36 392.34L451.39 457.30M485.02 387.35L487.45 451.20M517.15 382.44L522.88 445.22M522.88 445.22L529.93 522.43M548.77 377.61L557.68 439.34M557.68 439.34L568.62 515.12M579.88 372.85L591.87 433.56M591.87 433.56L606.55 507.95M610.51 368.17L625.46 427.88M625.46 427.88L643.76 500.92M658.48 422.30L680.25 494.03M690.94 416.81L716.06 487.26M722.85 411.42L751.19 480.63M754.22 406.12L785.67 474.11M785.07 400.91L819.52 467.72M815.42 395.78L852.76 461.44M351.08 407.83L435.82 394.87M845.26 390.73L885.39 455.28M346.61 433.54L434.80 419.52M434.80 419.52L519.31 406.09M519.31 406.09L600.34 393.21M874.63 385.77L917.43 449.22M341.75 461.42L433.70 446.20M433.70 446.20L521.64 431.65M521.64 431.65L605.83 417.71M605.83 417.71L686.50 404.36M686.50 404.36L763.87 391.56M903.52 380.89L948.91 443.27M336.46 491.76L432.50 475.18M432.50 475.18L524.17 459.36M524.17 459.36L611.77 444.24M611.77 444.24L695.56 429.77M695.56 429.77L775.78 415.92M775.78 415.92L852.67 402.65M931.95 376.08L979.84 437.43M526.92 489.51L618.22 473.04M618.22 473.04L705.38 457.31M705.38 457.31L788.68 442.28M788.68 442.28L868.37 427.90M868.37 427.90L944.68 414.14M959.93 371.35L1010.23 431.69M944.68 414.14L1017.83 400.94M716.06 487.26L802.68 470.90M802.68 470.90L885.39 455.28M885.39 455.28L964.45 440.34M964.45 440.34L1040.09 426.05" stroke="#3f97c4" stroke-opacity="0.85" stroke-width="1.25" fill="none"/><path d="M339.16 476.27L324.36 561.26M377.26 469.83L367.17 553.17M414.67 463.51L409.11 545.25M451.39 457.30L450.20 537.49M487.45 451.20L490.46 529.88M330.69 524.91L431.19 506.78M431.19 506.78L526.92 489.51M324.36 561.26L429.76 541.35M429.76 541.35L529.93 522.43M529.93 522.43L625.24 504.42M625.24 504.42L716.06 487.26" stroke="#3f97c4" stroke-opacity="0.85" stroke-width="1.5" fill="none"/></g><path d="M391.83 173.88L782.89 135.95L1040.09 426.05L324.36 561.26ZM401.88 177.79L777.55 140.90L1014.12 415.95L348.60 538.78Z" fill="#4fb3e2" fill-opacity="0.16" fill-rule="evenodd"/><polygon points="391.83,173.88 782.89,135.95 1040.09,426.05 324.36,561.26" fill="none" stroke="#6cc0e4" stroke-width="1"/></svg>
<svg style="position:absolute;left:485px;top:355px;" width="50" height="95" viewBox="0 0 50 95"><text x="0" y="0" font-family="Liberation Sans" font-weight="bold" font-size="14.5" fill="#4a9bc8" fill-opacity="0.45" transform="translate(18 10) rotate(96.5) scale(1 1.9)" textLength="77" lengthAdjust="spacingAndGlyphs">Workplane</text></svg>
<svg style="position:absolute;left:670px;top:180px;" width="130" height="330" viewBox="0 0 130 330"><defs><linearGradient id="bodyg" x1="0" x2="1" y1="0" y2="0"><stop offset="0" stop-color="#bf7b70"/><stop offset="0.35" stop-color="#c7837a"/><stop offset="0.6" stop-color="#c27d74"/><stop offset="0.85" stop-color="#b57169"/><stop offset="1" stop-color="#a66a63"/></linearGradient><linearGradient id="noseg" x1="0" x2="1" y1="0" y2="0"><stop offset="0" stop-color="#c3c8cb"/><stop offset="0.5" stop-color="#d3d7da"/><stop offset="1" stop-color="#b9bec2"/></linearGradient></defs><ellipse cx="68.10000000000002" cy="311.5" rx="28.5" ry="14" fill="#25b4ec"/><ellipse cx="68.29999999999995" cy="311" rx="26.5" ry="12.3" fill="#562c88" stroke="#1b2740" stroke-width="1.4"/><polygon points="30.5,264.9 39.9,253.3 96.9,255.0 118.5,287.6 85.8,297.0 78.6,317.5 56.5,300.3 21.1,301.4 36.0,273.2" fill="#72bccf" fill-opacity="0.88" stroke="#33537a" stroke-width="1.3" stroke-linejoin="round"/><polygon points="21.1,301.4 56.5,300.3 57.1,291.5 28.3,289.3" fill="#5aa5bb" fill-opacity="0.45"/><polygon points="85.8,297.0 118.5,287.6 112.4,281.5 86.9,288.2" fill="#5aa5bb" fill-opacity="0.45"/><path d="M21.1 301.4L42.7 264.4" stroke="#33537a" stroke-width="1.1"/><path d="M35 76L41.5 245Q44 275 47 286Q63 296 86 289Q92 286 93 278L101 76Z" fill="url(#bodyg)" stroke="#33537a" stroke-width="1.9" stroke-linejoin="round"/><path d="M35 76C40 34 59 7 68 7C77 7 96 34 101 76A33 11 0 0 1 35 76Z" fill="url(#noseg)" stroke="#33537a" stroke-width="1.9" stroke-linejoin="round"/><polygon points="56.5,293.7 67.0,289.3 73.7,278.2 85.8,291.5 85.8,297.0 78.6,317.5 56.5,300.3" fill="#6fb9cc" fill-opacity="0.8" stroke="#33537a" stroke-width="1.2" stroke-linejoin="round"/><polygon points="73.7,278.2 85.8,291.5 85.8,297.0 78.6,317.5" fill="#4f97ad" fill-opacity="0.5"/><path d="M73.7 278.2L78.6 317.5" stroke="#33537a" stroke-width="0.9"/><path d="M68 277.5V234.60000000000002" stroke="#3160f0" stroke-width="1.6"/><path d="M68 277.5L116.70000000000005 270.7" stroke="#5ee02a" stroke-width="1.6"/><defs><linearGradient id="axg" x1="0" y1="0" x2="0" y2="1"><stop offset="0" stop-color="#ff2a10"/><stop offset="1" stop-color="#f3a020"/></linearGradient></defs><path d="M68 277.5L79.29999999999995 309.4" stroke="url(#axg)" stroke-width="1.6"/></svg>
<div style="position:absolute;left:1161px;top:556px;width:191px;height:75px;background:#d9ecf5;border:1px solid #bfe0ee;border-radius:3px"></div>
<div style="position:absolute;left:1193px;top:571.80px;font-size:20px;line-height:20px;color:#3a7796;font-weight:400;white-space:nowrap;">Info</div>
<div style="position:absolute;left:1193px;top:599.10px;font-size:15px;line-height:15px;color:#3a7796;font-weight:400;white-space:nowrap;">count down start</div>
<svg style="position:absolute;left:1328.0px;top:576.0px;" width="9.0" height="9.0" viewBox="0 0 9.0 9.0"><path d="M1 1L8.0 8.0M8.0 1L1 8.0" stroke="#a9c8d6" stroke-width="2"/></svg>
<div style="position:absolute;left:1238px;top:639px;width:114px;height:75px;background:#d9ecf5;border:1px solid #bfe0ee;border-radius:3px"></div>
<div style="position:absolute;left:1270.5px;top:654.80px;font-size:20px;line-height:20px;color:#3a7796;font-weight:400;white-space:nowrap;">Info</div>
<div style="position:absolute;left:1270px;top:681.60px;font-size:15px;line-height:15px;color:#3a7796;font-weight:400;white-space:nowrap;">5</div>
<svg style="position:absolute;left:1328.0px;top:659.0px;" width="9.0" height="9.0" viewBox="0 0 9.0 9.0"><path d="M1 1L8.0 8.0M8.0 1L1 8.0" stroke="#a9c8d6" stroke-width="2"/></svg>
<div style="position:absolute;left:0px;top:728px;width:1366px;height:40px;background:#131313"></div>
<svg style="position:absolute;left:16px;top:740px;" width="17" height="17" viewBox="0 0 17 17"><path d="M0 2.3L6.9 1.3V7.9H0Z M7.8 1.2L16.5 0V7.9H7.8Z M0 8.8H6.9V15.5L0 14.5Z M7.8 8.8H16.5V16.5L7.8 15.4Z" fill="#fff"/></svg>
<div style="position:absolute;left:48px;top:728px;width:343px;height:40px;background:#f2f2f2;border-top:1px solid #cfcfcf;box-sizing:border-box"></div>
<svg style="position:absolute;left:60px;top:738px;" width="18" height="19" viewBox="0 0 18 19"><circle cx="10.3" cy="7.4" r="5.3" fill="none" stroke="#111" stroke-width="1.2"/><path d="M6.6 11.1L0.6 17.3" stroke="#111" stroke-width="1.3"/></svg>
<div style="position:absolute;left:88px;top:741.16px;font-size:14.6px;line-height:14.6px;color:#2b2b2b;font-weight:400;white-space:nowrap;">Type here to search</div>
<svg style="position:absolute;left:406px;top:739px;" width="20" height="20" viewBox="0 0 20 20"><circle cx="10" cy="10" r="7.7" fill="none" stroke="#fff" stroke-width="1.8"/></svg>
<svg style="position:absolute;left:455px;top:739px;" width="18" height="18" viewBox="0 0 18 18"><rect x="2.5" y="4.5" width="9" height="8" fill="none" stroke="#fff" stroke-width="1.2"/><path d="M1 2H13M1 15.5H13" stroke="#fff" stroke-width="1.2"/><rect x="14" y="4" width="3" height="3" fill="#fff"/><path d="M15.5 9V16" stroke="#fff" stroke-width="1.2"/></svg>
<svg style="position:absolute;left:502px;top:737px;" width="26" height="22" viewBox="0 0 26 22"><path d="M1 3H9L11 5H25V20H1Z" fill="#e8a92c"/><rect x="1" y="7" width="24" height="13" fill="#f6c84a"/><rect x="8" y="11" width="10" height="4" fill="#2a7fd4"/></svg>
<div style="position:absolute;left:495px;top:765px;width:40px;height:3px;background:#76b9ed"></div>
<svg style="position:absolute;left:553px;top:737px;" width="22" height="22" viewBox="0 0 22 22"><path d="M11 1C5 1 1 5.5 1 11.5C1 17 5.5 21 11 21C14 21 16.5 20 18.5 18.5V14C16.5 15.5 14 16.5 11.5 16.5C8 16.5 6 14.5 6 12.5H21C21 12 21 11.5 21 11C21 5 17 1 11 1ZM6.3 9C6.8 6.5 8.7 5 11 5C13.4 5 15.3 6.5 15.7 9Z" fill="#1e88e5"/></svg>
<svg style="position:absolute;left:605px;top:735px;" width="15" height="27" viewBox="0 0 15 27"><path d="M12.1 1.1L6.8 8.3L1.8 9.8L7.8 15.5L2.9 24.8L13 15.7L7.2 10.2Z" fill="#fff"/></svg>
<svg style="position:absolute;left:652px;top:737px;" width="21" height="23" viewBox="0 0 21 23"><path d="M1 4L13 0L20 2V21L13 23L1 19L13 20.5V3.5L5 5.5V17.5L1 19Z" fill="#e64a19"/></svg>
<svg style="position:absolute;left:698px;top:735px;" width="26" height="25" viewBox="0 0 26 25"><path d="M8 6V4A5 5 0 0 1 18 4V6" fill="none" stroke="#fff" stroke-width="1.8"/><rect x="1" y="6" width="24" height="19" fill="#fff"/><rect x="8" y="10" width="4.5" height="4.5" fill="#f25022"/><rect x="13.5" y="10" width="4.5" height="4.5" fill="#7fba00"/><rect x="8" y="15.5" width="4.5" height="4.5" fill="#00a4ef"/><rect x="13.5" y="15.5" width="4.5" height="4.5" fill="#ffb900"/></svg>
<svg style="position:absolute;left:749px;top:736px;" width="22" height="25" viewBox="0 0 22 25"><path d="M1 1L11 8L21 1V20L11 25L1 20Z" fill="#fff"/><path d="M4.5 8L11 12.5L17.5 8V17.5L11 21L4.5 17.5Z" fill="#131313"/></svg>
<svg style="position:absolute;left:797px;top:737px;" width="25" height="22" viewBox="0 0 25 22"><path d="M1 2.5H6.5L8.5 0.5H15.5L17.5 2.5H24V21H1Z" fill="#fff"/><circle cx="12.5" cy="10.5" r="4.6" fill="#131313"/><circle cx="20.5" cy="5.5" r="0.8" fill="#131313"/></svg>
<svg style="position:absolute;left:846px;top:736px;" width="24" height="24" viewBox="0 0 24 24"><rect x="0" y="0" width="24" height="24" fill="#0078d7"/><circle cx="12" cy="12" r="7.3" fill="#00979c"/><path d="M5.5 12A2.2 2.2 0 1 1 9.9 12A2.2 2.2 0 1 1 5.5 12ZM14.1 12A2.2 2.2 0 1 1 18.5 12A2.2 2.2 0 1 1 14.1 12Z" fill="none" stroke="#fff" stroke-width="1.2"/></svg>
<div style="position:absolute;left:883px;top:728px;width:48px;height:40px;background:#3b3b3b"></div>
<div style="position:absolute;left:883px;top:765px;width:48px;height:3px;background:#76b9ed"></div>
<svg style="position:absolute;left:895px;top:736px;" width="23" height="23" viewBox="0 0 23 23"><circle cx="11.5" cy="11.5" r="11" fill="#db4437"/><path d="M11.5 11.5L2 17A11 11 0 0 0 12 22.5Z" fill="#0f9d58"/><path d="M11.5 11.5L2 17A11 11 0 0 1 1.5 6.5L1.5 6.5Z" fill="#0f9d58"/><path d="M11.5 11.5L12 22.5A11 11 0 0 0 21.8 8.5H11.5Z" fill="#ffcd40"/><circle cx="11.5" cy="11.5" r="5" fill="#fff"/><circle cx="11.5" cy="11.5" r="4" fill="#4285f4"/></svg>
<svg style="position:absolute;left:1061px;top:737px;" width="23" height="23" viewBox="0 0 23 23"><circle cx="11.5" cy="11.5" r="11" fill="#fff"/><circle cx="11.5" cy="11.5" r="9.3" fill="#1c86d2"/><text x="11.5" y="16.5" font-family="Liberation Sans" font-weight="bold" font-size="14" fill="#fff" text-anchor="middle">?</text></svg>
<svg style="position:absolute;left:1093px;top:743px;" width="13" height="8" viewBox="0 0 13 8"><path d="M1 7L6.5 1.5L12 7" fill="none" stroke="#fff" stroke-width="1.3"/></svg>
<svg style="position:absolute;left:1114px;top:741px;" width="17" height="11" viewBox="0 0 17 11"><path d="M4 10.5H14A3 3 0 0 0 14 4.5A4.5 4.5 0 0 0 6 3.5A3.5 3.5 0 0 0 4 10.5Z" fill="#e8e8e8"/></svg>
<svg style="position:absolute;left:1139px;top:742px;" width="17" height="11" viewBox="0 0 17 11"><rect x="0.5" y="1" width="14" height="9" fill="none" stroke="#fff" stroke-width="1.2"/><rect x="15" y="3.5" width="1.5" height="4" fill="#fff"/><rect x="2.5" y="3" width="7" height="5" fill="#fff"/></svg>
<svg style="position:absolute;left:1165px;top:739px;" width="16" height="16" viewBox="0 0 16 16"><path d="M1 15A14 14 0 0 1 15 1M4 15A11 11 0 0 1 15 4M7 15A8 8 0 0 1 15 7M10 15A5 5 0 0 1 15 10" fill="none" stroke="#fff" stroke-width="1"/><circle cx="14" cy="14" r="1.5" fill="#fff"/></svg>
<svg style="position:absolute;left:1185px;top:740px;" width="19" height="16" viewBox="0 0 19 16"><path d="M1 5H4L8 1.5V14.5L4 11H1Z" fill="none" stroke="#fff" stroke-width="1.1"/><path d="M11 5A4 4 0 0 1 11 11M13.5 3A7 7 0 0 1 13.5 13M16 1A10 10 0 0 1 16 15" fill="none" stroke="#fff" stroke-width="1"/></svg>
<div style="position:absolute;left:1213px;top:741.64px;font-size:11.6px;line-height:11.6px;color:#fff;font-weight:400;white-space:nowrap;">ENG</div>
<div style="position:absolute;left:1264.5px;top:731.69px;font-size:11.3px;line-height:11.3px;color:#fff;font-weight:400;white-space:nowrap;">11:45</div>
<div style="position:absolute;left:1249px;top:749.68px;font-size:11.4px;line-height:11.4px;color:#fff;font-weight:400;white-space:nowrap;">09-05-2020</div>
<div style="position:absolute;left:1361px;top:728px;width:1px;height:40px;background:#4a4a4a"></div>
<svg style="position:absolute;left:1324px;top:739px;" width="18" height="18" viewBox="0 0 18 18"><path d="M1 1H17V13H8L4 17V13H1Z" fill="none" stroke="#fff" stroke-width="1.2"/></svg>
</body></html>
